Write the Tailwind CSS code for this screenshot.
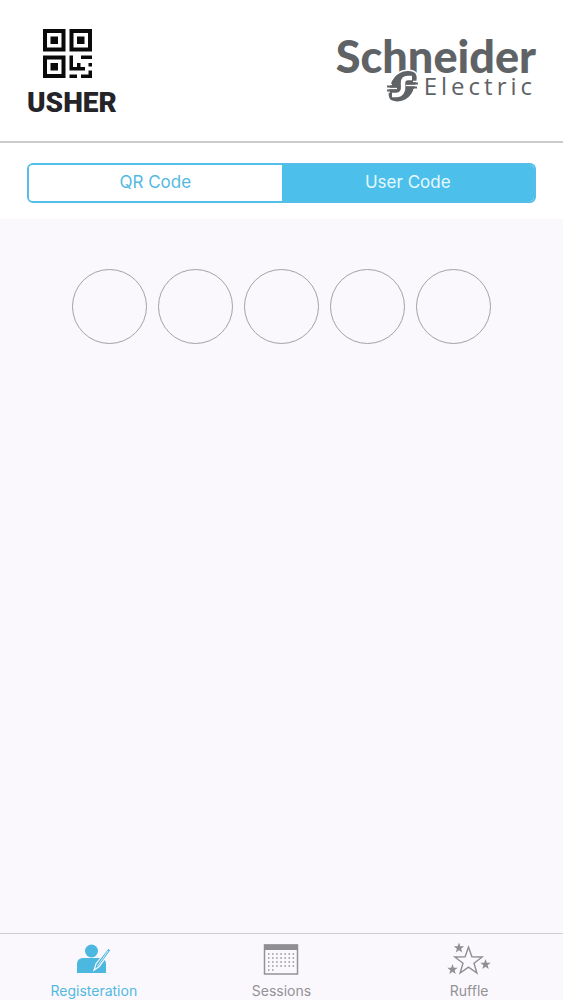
<!DOCTYPE html>
<html lang="en">
<head>
<meta charset="utf-8">
<meta name="viewport" content="width=device-width, initial-scale=1">
<title>Usher – Registration</title>
<script src="https://cdn.jsdelivr.net/npm/@tailwindcss/browser@4"></script>
</head>
<body class="flex min-h-screen flex-col bg-[#faf8fc] font-['Inter',sans-serif]">
<header class="flex items-start justify-between border-b-2 border-[#cbcbcc] bg-white px-[27px] pt-7 pb-[22px]">
  <div class="flex flex-col items-center">
    <svg class="mr-2 h-[51px] w-[51px]" viewBox="0 0 51 51" aria-hidden="true" fill="#0a0a0a">
      <g fill="none" stroke="#0a0a0a" stroke-width="4"><path d="M3 3h18.500v18.500H3zM29.500 3H48v18.500H29.500zM3 29.500h18.500V48H3z"/></g>
      <path d="M8.500 8.500h7.500v7.500H8.500zM35 8.500h7.500v7.500H35zM8.500 35h7.500v7.500H8.500z"/>
      <path d="M27.500 27.500h3.500V39h4v3.500h-7.500zM27.500 46.500h7.500V50h-7.500zM35 35h3.500v4h4.500v3.500h-8zM39 27.500h11v3.500h-11zM46.500 35H50v3.500h-3.500zM46.500 42.500H50V50h-11v-3.500h7.500z"/>
    </svg>
    <span class="mt-2 font-['Roboto',sans-serif] text-[28px] leading-8 font-black text-[#242328]">USHER</span>
  </div>
  <div class="flex flex-col items-end text-[#606366]">
    <span class="mt-[10px] font-['Lato',sans-serif] text-[45px] leading-9 font-black">Schneider</span>
    <div class="flex h-6 items-center gap-1.5">
      <svg class="h-[34px] w-8" viewBox="0 0 32 34" aria-hidden="true">
        <path d="M14 3C18 .500 27 .500 30 4c2 3 1.500 8 0 12-2 7-5 12-10 15-5 3-14 3-17-1-2-4-1-10 1-15C6 9 10 5 14 3Z" fill="#606366" stroke="#fff" stroke-width="1.500"/>
        <path d="M26 9h-4c-4 0-5 2-5 5 0 4 1 6-1 9-1 2-3 3-6 3H6" fill="none" stroke="#fff" stroke-width="4.500"/>
        <path d="M0 15.500h6M0 19.500h11M0 23h4M27 12.500h5M20 16.500h12M27 21h5" stroke="#fff" stroke-width="1.500"/>
        <path d="M1 17.500h11M1 21.500h10M20 14.500h12M20 18.500h11" stroke="#606366" stroke-width="2"/>
      </svg>
      <span class="font-['Open_Sans',sans-serif] text-[24px] leading-6 tracking-[4px]">Electric</span>
    </div>
  </div>
</header>
<main class="flex flex-1 flex-col">
  <div class="bg-white px-[27px] pt-5 pb-4">
    <div class="flex h-10 overflow-hidden rounded-md border-2 border-[#53bfe9] text-[17px]" role="group" aria-label="Code type">
      <button type="button" class="flex-1 bg-white text-[#53b9df]" aria-pressed="false">QR Code</button>
      <button type="button" class="flex-1 bg-[#4cbfeb] text-[#e6faff]" aria-pressed="true">User Code</button>
    </div>
  </div>
  <form class="flex justify-center gap-[11px] px-4 pt-[50px]" aria-label="User code">
    <input aria-label="Digit 1" maxlength="1" inputmode="numeric" class="h-[75px] w-[75px] rounded-full border border-[#a3a2a5] text-center text-3xl">
    <input aria-label="Digit 2" maxlength="1" inputmode="numeric" class="h-[75px] w-[75px] rounded-full border border-[#a3a2a5] text-center text-3xl">
    <input aria-label="Digit 3" maxlength="1" inputmode="numeric" class="h-[75px] w-[75px] rounded-full border border-[#a3a2a5] text-center text-3xl">
    <input aria-label="Digit 4" maxlength="1" inputmode="numeric" class="h-[75px] w-[75px] rounded-full border border-[#a3a2a5] text-center text-3xl">
    <input aria-label="Digit 5" maxlength="1" inputmode="numeric" class="h-[75px] w-[75px] rounded-full border border-[#a3a2a5] text-center text-3xl">
  </form>
</main>
<nav class="grid grid-cols-3 border-t border-[#d0ced2] text-sm leading-4 text-[#939296]" aria-label="Main">
  <a href="#registration" aria-current="page" class="flex flex-col items-center gap-[5px] pt-2 pb-px text-[#53b9df]">
    <svg class="h-9 w-9" viewBox="0 0 36 36" aria-hidden="true" fill="#4cb8df">
      <circle cx="15.500" cy="9" r="6.500"/>
      <path d="M1 31v-9q0-5.500 6-6h17q6 .500 6 6v9z"/>
      <path d="m32.500 6 2.500 2.200-11.500 16-5.500 4 2-6.500z" stroke="#faf8fc" stroke-width="1.200"/>
      <path d="M32 9 21.500 24" stroke="#d5eef8" stroke-width="1"/>
    </svg>
    <span>Registeration</span>
  </a>
  <a href="#sessions" class="flex flex-col items-center gap-[5px] pt-2 pb-px">
    <svg class="h-9 w-9" viewBox="0 0 36 36" aria-hidden="true">
      <path d="M1.500 3h33v29h-33z" fill="none" stroke="#939296" stroke-width="1.500"/>
      <path d="M1 2.500h34V8H1z" fill="#8f8e92"/>
      <path d="M5 12h27M5 16h27M5 20h27M5 24h27M5 28h6" stroke="#939296" stroke-width="1.500" stroke-dasharray="1.500 2.600"/>
    </svg>
    <span>Sessions</span>
  </a>
  <a href="#ruffle" class="flex flex-col items-center gap-[5px] pt-2 pb-px">
    <svg class="h-9 w-11" viewBox="0 0 44 36" aria-hidden="true" fill="#8f8e92">
      <path d="m21.500 5 3.400 9.700 10.300.3-8.200 6.200 2.900 9.900-8.400-5.900-8.400 5.900 2.900-9.900L7.800 15l10.300-.3z" fill="none" stroke="#8f8e92" stroke-width="1.400"/>
      <path id="star" d="m12 .500 1.300 3.700 3.900.1-3.100 2.400 1.100 3.800-3.200-2.200-3.200 2.200 1.100-3.800-3.100-2.400 3.900-.1z"/>
      <use href="#star" x="-6.500" y="21.500"/>
      <use href="#star" x="26.500" y="16.500"/>
    </svg>
    <span>Ruffle</span>
  </a>
</nav>
</body>
</html>
